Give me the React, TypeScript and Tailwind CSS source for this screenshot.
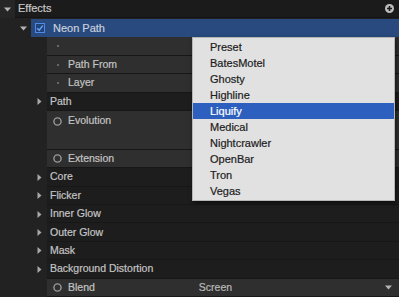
import React from "react";

type RowKind = "group" | "leaf" | "dot";

const rows: { label: string; kind: RowKind; tall?: boolean; value?: string }[] = [
  { label: "", kind: "dot" },
  { label: "Path From", kind: "dot" },
  { label: "Layer", kind: "dot" },
  { label: "Path", kind: "group" },
  { label: "Evolution", kind: "leaf", tall: true },
  { label: "Extension", kind: "leaf" },
  { label: "Core", kind: "group" },
  { label: "Flicker", kind: "group" },
  { label: "Inner Glow", kind: "group" },
  { label: "Outer Glow", kind: "group" },
  { label: "Mask", kind: "group" },
  { label: "Background Distortion", kind: "group" },
  { label: "Blend", kind: "leaf", value: "Screen" },
];

const presets = [
  "Preset",
  "BatesMotel",
  "Ghosty",
  "Highline",
  "Liquify",
  "Medical",
  "Nightcrawler",
  "OpenBar",
  "Tron",
  "Vegas",
];

function TriDown() {
  return (
    <svg width="7" height="5" viewBox="0 0 7 5">
      <path d="M0 0.5 L7 0.5 L3.5 4.5 Z" fill="#b4b4b4" />
    </svg>
  );
}

function TriRight() {
  return (
    <svg width="5" height="7" viewBox="0 0 5 7">
      <path d="M0.5 0 L4.5 3.5 L0.5 7 Z" fill="#a8a8a8" />
    </svg>
  );
}

function Ring() {
  return (
    <svg width="9" height="9" viewBox="0 0 9 9">
      <circle cx="4.5" cy="4.5" r="3.6" fill="none" stroke="#9a9a9a" strokeWidth="1.4" />
    </svg>
  );
}

export default function App() {
  return (
    <div
      className="relative w-[399px] h-[297px] overflow-hidden bg-[#222222] text-[10.5px] text-[#c4c4c4] [-webkit-text-stroke:0.2px]"
      style={{ fontFamily: '"Liberation Sans", Arial, sans-serif' }}
    >
      {/* Effects header */}
      <div className="flex h-[18px]">
        <div className="w-[15px] shrink-0 bg-[#262626] flex items-center justify-center">
          <TriDown />
        </div>
        <div className="flex-1 bg-[#1b1b1b] border-b border-[#141414] flex items-center pl-[3px] text-[11px] text-[#c8c8c8]">
          Effects
          <span className="ml-auto mr-[5px] flex h-[9px] w-[9px] items-center justify-center rounded-full bg-[#bdbdbd]">
            <svg width="7" height="7" viewBox="0 0 7 7">
              <path d="M3.5 1 V6 M1 3.5 H6" stroke="#1b1b1b" strokeWidth="1.6" />
            </svg>
          </span>
        </div>
      </div>

      {/* Neon Path */}
      <div className="flex h-[18.4px] mt-px">
        <div className="w-[31px] shrink-0 flex items-center pl-[20px]">
          <TriDown />
        </div>
        <div className="flex-1 bg-[#284a7e] flex items-center pl-[4px] text-[11px] text-[#c9d0dc]">
          <span className="flex h-[10px] w-[10px] items-center justify-center border border-[#4d8ae6] bg-[#22427a]">
            <svg width="8" height="8" viewBox="0 0 8 8">
              <path d="M1.2 4.2 L3.2 6.2 L6.8 1.6" fill="none" stroke="#6aa6ff" strokeWidth="1.4" />
            </svg>
          </span>
          <span className="ml-[8px]">Neon Path</span>
        </div>
      </div>

      {rows.map((r, i) => {
        const h = r.tall ? "h-[38.6px]" : "h-[18.45px]";
        const leafBg = r.kind === "group" ? "bg-[#1d1d1d]" : "bg-[#2f2f2f]";
        return (
          <div key={i} className={`flex ${h}`}>
            <div className="w-[47px] shrink-0 flex items-start pl-[37px]">
              {r.kind === "group" && (
                <span className="flex h-[18px] items-center">
                  <TriRight />
                </span>
              )}
            </div>
            <div className={`flex-1 ${leafBg} border-b border-[#171717] flex items-start`}>
              <div className={`flex w-full items-center ${r.tall ? "h-[20px]" : "h-[18px]"}`}>
                {r.kind === "group" ? (
                  <span className="pl-[3px]">{r.label}</span>
                ) : (
                  <>
                    <span className="w-[21px] flex justify-center">
                      {r.kind === "dot" ? (
                        <span className="h-[2px] w-[2px] rounded-full bg-[#7a7a7a]" />
                      ) : (
                        <Ring />
                      )}
                    </span>
                    <span>{r.label}</span>
                    {r.value && (
                      <>
                        <span className="ml-[104px] text-[#b8b8b8]">{r.value}</span>
                        <span className="ml-auto mr-[7px]">
                          <TriDown />
                        </span>
                      </>
                    )}
                  </>
                )}
              </div>
            </div>
          </div>
        );
      })}

      {/* preset dropdown */}
      <div className="absolute left-[192px] top-[37px] w-[203px] border border-[#b5b5b5] bg-[#e1e1e1] py-px shadow-[1px_2px_4px_rgba(0,0,0,0.6)] text-[11px] text-[#1c1c1c]">
        {presets.map((p) => (
          <div
            key={p}
            className={`h-[16px] flex items-center pl-[17px] ${
              p === "Liquify" ? "bg-[#2d5fbf] text-white" : ""
            }`}
          >
            {p}
          </div>
        ))}
      </div>
    </div>
  );
}
